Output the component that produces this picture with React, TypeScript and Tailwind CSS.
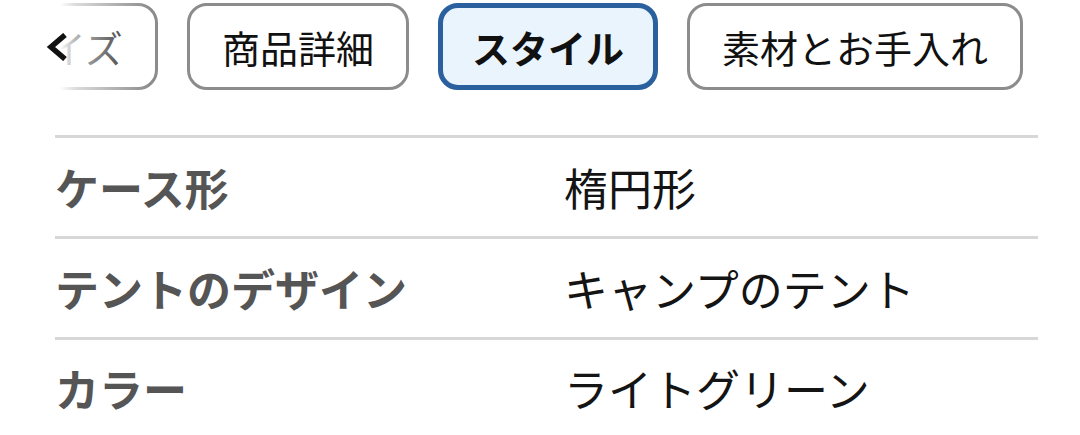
const tabs = [
  { label: "サイズ", active: false },
  { label: "商品詳細", active: false },
  { label: "スタイル", active: true },
  { label: "素材とお手入れ", active: false },
];

const specs = [
  { name: "ケース形", value: "楕円形" },
  { name: "テントのデザイン", value: "キャンプのテント" },
  { name: "カラー", value: "ライトグリーン" },
];

export default function App() {
  return (
    <div className="h-[435px] w-[1080px] overflow-hidden bg-white font-['Noto_Sans_CJK_JP',sans-serif]">
      <div className="relative h-[110px] overflow-hidden">
        <div className="ml-[-25px] flex gap-[29px] pt-[3px]">
          {tabs.map((tab) => (
            <div
              key={tab.label}
              className={
                tab.active
                  ? "flex h-[87px] shrink-0 items-center justify-center rounded-[20px] border-[5px] border-[#2b609f] bg-[#eaf4fd] px-[29px] text-[38px] font-bold text-[#111]"
                  : "flex h-[87px] shrink-0 items-center justify-center rounded-[20px] border-[3px] border-[#8c8c8c] bg-white px-[32px] text-[38px] text-[#111]"
              }
            >
              {tab.label}
            </div>
          ))}
        </div>
        <div className="absolute inset-y-0 left-0 flex w-[150px] items-center bg-gradient-to-r from-white from-40% via-white/70 to-transparent pl-[46px]">
          <svg width="22" height="28" viewBox="0 0 22 28" className="mb-[16px]">
            <path d="M19 2 L5 14 L19 26" fill="none" stroke="#111" strokeWidth="5.5" strokeLinejoin="miter" />
          </svg>
        </div>
      </div>

      <div className="ml-[55px] mr-[42px] mt-[25px] border-t-[3px] border-[#d7d7d7]">
        {specs.map((row, i) => (
          <div
            key={row.name}
            className={
              i < specs.length - 1
                ? "flex h-[101px] items-center border-b-[3px] border-[#d7d7d7] text-[44px]"
                : "flex h-[96px] items-center text-[44px]"
            }
          >
            <div className="w-[509px] font-semibold text-[#555]">{row.name}</div>
            <div className="text-[#141414]">{row.value}</div>
          </div>
        ))}
      </div>
      <div className="h-[2px] bg-[#b5b5b5]" />
    </div>
  );
}
